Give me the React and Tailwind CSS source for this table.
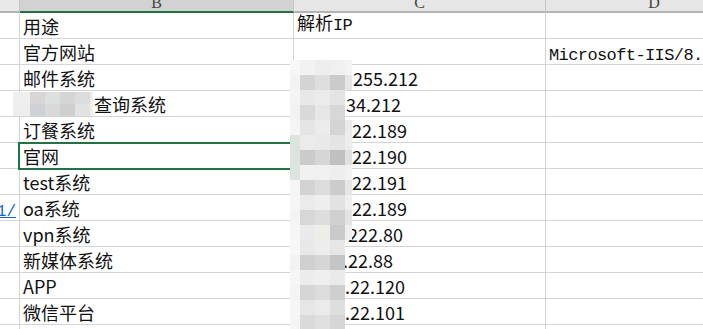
const rows = [
  { b: "用途", title: true },
  { b: "官方网站", d: "Microsoft-IIS/8." },
  { b: "邮件系统", c: "255.212", cPad: "pl-[59px]" },
  { b: "查询系统", bPad: "pl-[74px]", c: "34.212", cPad: "pl-[52px]" },
  { b: "订餐系统", c: "22.189", cPad: "pl-[58px]" },
  { b: "官网", c: "22.190", cPad: "pl-[58px]", selected: true },
  { b: "test系统", c: "22.191", cPad: "pl-[58px]" },
  { a: "1/", b: "oa系统", c: "22.189", cPad: "pl-[58px]" },
  { b: "vpn系统", c: "222.80", cPad: "pl-[54px]" },
  { b: "新媒体系统", c: ".22.88", cPad: "pl-[49px]" },
  { b: "APP", c: ".22.120", cPad: "pl-[51px]" },
  { b: "微信平台", c: ".22.101", cPad: "pl-[51px]" },
  {},
];

// pixelated blur over the ip prefixes (column C)
const mosaicCols = ["w-[10px]", "w-[15px]", "w-[15px]", "w-[15px]", "w-[7px]"];
const mosaic = [
  ["bg-[#f7f7f7]", "bg-[#f2f2f2]", "bg-[#eeeeee]", "bg-[#f0f0f0]", "bg-[#f4f4f4]"],
  ["bg-[#f3f3f3]", "bg-[#d4d4d4]", "bg-[#dedede]", "bg-[#cbcbcb]", "bg-[#e6e6e6]"],
  ["bg-[#f4f4f4]", "bg-[#e8e8e8]", "bg-[#ebebeb]", "bg-[#e4e4e4]", ""],
  ["bg-[#f2f2f2]", "bg-[#d9d9d9]", "bg-[#e6e6e6]", "bg-[#d7d7d7]", ""],
  ["bg-[#f5f5f5]", "bg-[#e5e5e5]", "bg-[#ececec]", "bg-[#d4d4d4]", "bg-[#ebebeb]"],
  ["bg-[#dbe5dd]", "bg-[#ebebeb]", "bg-[#e9e9e9]", "bg-[#e4e4e4]", "bg-[#ececec]"],
  ["bg-[#dbe5dd]", "bg-[#cacccc]", "bg-[#d6d6d6]", "bg-[#c0c0c0]", "bg-[#e0e0e0]"],
  ["bg-[#dbe5dd]", "bg-[#f1f1f1]", "bg-[#f0f0f0]", "bg-[#eeeeee]", "bg-[#f2f2f2]"],
  ["bg-[#f5f5f5]", "bg-[#d3d3d3]", "bg-[#dcdcdc]", "bg-[#cccccc]", "bg-[#e6e6e6]"],
  ["bg-[#f6f6f6]", "bg-[#ebebeb]", "bg-[#eeeeee]", "bg-[#e2e2e2]", "bg-[#efefef]"],
  ["bg-[#f4f4f4]", "bg-[#d7d7d7]", "bg-[#dddddd]", "bg-[#d0d0d0]", "bg-[#e4e4e4]"],
  ["bg-[#f6f6f6]", "bg-[#eaeaea]", "bg-[#efede9]", "bg-[#cacaca]", "bg-[#efefef]"],
  ["bg-[#f7f7f7]", "bg-[#e8e8e8]", "bg-[#ededed]", "bg-[#e6e6e6]", ""],
  ["bg-[#f2f2f2]", "bg-[#cfd0d0]", "bg-[#d6d6d6]", "bg-[#c5c5c5]", ""],
  ["bg-[#f6f6f6]", "bg-[#ececec]", "bg-[#efefef]", "bg-[#eaeaea]", ""],
  ["bg-[#f4f4f4]", "bg-[#d6d6d6]", "bg-[#dcdcdc]", "bg-[#cfcfcf]", ""],
  ["bg-[#f6f6f6]", "bg-[#e6e6e6]", "bg-[#ebebeb]", "bg-[#dedede]", ""],
  ["bg-[#f5f5f5]", "bg-[#dadada]", "bg-[#e0e0e0]", "bg-[#d6d6d6]", ""],
];

// blur over the first characters of row 4
const nameCols = ["w-[17px]", "w-[15px]", "w-[15px]", "w-[15px]", "w-[15px]", "w-[3px]"];
const nameMosaic = [
  ["bg-[#efefef]", "bg-[#d9d5d4]", "bg-[#dedfe0]", "bg-[#d5d5d3]", "bg-[#dcdcdc]", "bg-[#eeeeee]"],
  ["bg-[#eeeeee]", "bg-[#ced1d5]", "bg-[#d9d9d9]", "bg-[#cfcfcf]", "bg-[#e2e2e2]", "bg-[#efefef]"],
];

function Mosaic({ cols, grid, cell, className }) {
  return (
    <div className={"pointer-events-none absolute flex flex-col " + className}>
      {grid.map((row, i) => (
        <div key={i} className="flex">
          {row.map((bg, j) => (
            <div key={j} className={[cols[j], cell, bg].join(" ")} />
          ))}
        </div>
      ))}
    </div>
  );
}

export default function App() {
  return (
    <div className="relative h-[329px] w-[703px] overflow-hidden bg-white font-['Noto_Sans_CJK_SC',sans-serif] text-[18px] text-[#111]">
      <div className="flex h-[13px] font-['Liberation_Serif',serif] text-[16px] leading-[16px] text-[#444]">
        <div className="w-[20px] shrink-0 border-r border-b-2 border-r-[#c6c6c6] border-b-[#b4b4b4] bg-[#e9e9e9]" />
        <div className="flex w-[274px] shrink-0 items-end justify-center border-r border-b-2 border-r-[#c6c6c6] border-b-[#217346] bg-[#d2d2d2]">
          B
        </div>
        <div className="flex w-[252px] shrink-0 items-end justify-center border-r border-b-2 border-r-[#c6c6c6] border-b-[#b4b4b4] bg-[#e6e6e6]">
          C
        </div>
        <div className="flex w-[216px] shrink-0 items-end justify-center border-b-2 border-b-[#b4b4b4] bg-[#e6e6e6]">
          D
        </div>
      </div>

      {rows.map((row, i) => (
        <div key={i} className="flex h-[26px]">
          <div className="flex w-[20px] shrink-0 items-end justify-end overflow-hidden border-r border-b border-[#d4d4d4] pr-[3px]">
            {row.a ? (
              <span className="font-['Liberation_Mono',monospace] text-[16px] leading-[16px] whitespace-nowrap text-[#1366c9] underline">
                {row.a}
              </span>
            ) : null}
          </div>

          <div
            className={[
              "relative flex w-[274px] shrink-0 items-end border-r border-b border-[#d4d4d4] pb-[2px] leading-[20px] whitespace-nowrap",
              row.bPad || "pl-[3px]",
            ].join(" ")}
          >
            {row.b}
            {row.selected ? (
              <div className="absolute -top-[1px] -right-[1px] -bottom-[2px] -left-[2px] border-2 border-[#217346]" />
            ) : null}
          </div>

          <div
            className={[
              "flex w-[252px] shrink-0 items-end border-r border-b border-[#d4d4d4] whitespace-nowrap",
              row.cPad || "pl-[3px]",
            ].join(" ")}
          >
            {row.title ? (
              <span className="pb-[2px] leading-[20px]">
                解析
                <span className="font-['Liberation_Mono',monospace] text-[17px] tracking-[-0.6px]">
                  IP
                </span>
              </span>
            ) : (
              <span className="pb-[2px] leading-[20px]">{row.c}</span>
            )}
          </div>

          <div className="flex w-[216px] shrink-0 items-end border-b border-[#d4d4d4] pl-[3px] whitespace-nowrap">
            {row.d ? (
              <span className="font-['Liberation_Mono',monospace] text-[17px] leading-[16px] tracking-[-0.6px]">
                {row.d}
              </span>
            ) : null}
          </div>
        </div>
      ))}

      <Mosaic cols={mosaicCols} grid={mosaic} cell="h-[15px]" className="top-[60px] left-[290px]" />
      <Mosaic cols={nameCols} grid={nameMosaic} cell="h-[12px]" className="top-[92px] left-[13px]" />
    </div>
  );
}
